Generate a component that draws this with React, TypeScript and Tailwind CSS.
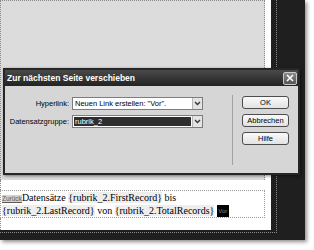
import React from "react";

const sans = { fontFamily: '"Liberation Sans", Arial, sans-serif' };
const serif = { fontFamily: '"Liberation Serif", "Times New Roman", serif' };

function Chevron() {
  return (
    <svg width="7" height="5" viewBox="0 0 7 5">
      <path d="M1 1 L3.5 3.5 L6 1" stroke="#333" strokeWidth="1.3" fill="none" />
    </svg>
  );
}

function Select({ text, selected }: { text: string; selected?: boolean }) {
  return (
    <div className="w-[131px] h-[13px] border border-[#7d7d7d] bg-white flex">
      <div
        className={
          selected
            ? "flex-1 m-[1px] bg-[#2e2e2e] text-white text-[7.5px] leading-[9px] pl-[1px] flex items-center"
            : "flex-1 text-black text-[7.5px] leading-[11px] pl-[2px] flex items-center"
        }
      >
        {text}
      </div>
      <div className="w-[10px] h-full bg-[#e4e4e4] border-l border-[#b5b5b5] flex items-center justify-center">
        <Chevron />
      </div>
    </div>
  );
}

function Btn({ label }: { label: string }) {
  return (
    <div className="w-[47px] h-[13px] border border-[#4d4d4d] rounded-[3px] bg-gradient-to-b from-[#fafafa] to-[#e2e2e2] flex items-center justify-center text-[7.5px] text-black">
      {label}
    </div>
  );
}

function Ph({ children }: { children: React.ReactNode }) {
  return <span className="bg-[#eeeeee]">{children}</span>;
}

export default function App() {
  return (
    <div className="w-[314px] h-[250px] bg-white relative overflow-hidden">
      <div className="w-[305px] h-[240px] bg-[#1f1f1f] shadow-[2px_2px_4px_rgba(0,0,0,0.45)]">
        <div className="w-[277px] h-[233px] border-r border-b border-dotted border-[#8a8a8a]">
          <div className="w-[271px] h-[230px] bg-white flex flex-col">
            <div className="w-[265px] h-[180px] shrink-0 bg-[#dcdcdc] border-t border-l border-r border-dotted border-[#8a8a8a]" />
            <div className="h-[10px] shrink-0 border-l border-dotted border-[#8a8a8a]" />
            <div
              className="w-[265px] shrink-0 border border-dotted border-[#9a9a9a] pt-[1px] pl-[1px] text-[10px] leading-[12px] text-black"
              style={serif}
            >
              <span
                className="bg-[#d2d2d2] text-[#5a5a5a] underline text-[6.5px] align-baseline"
                style={sans}
              >
                Zurück
              </span>
              Datensätze <Ph>{"{rubrik_2.FirstRecord}"}</Ph> bis
              <br />
              <Ph>{"{rubrik_2.LastRecord}"}</Ph> von <Ph>{"{rubrik_2.TotalRecords}"}</Ph>{" "}
              <span
                className="inline-block align-bottom bg-black text-[#8a8a8a] text-[6px] leading-[12px] w-[12px] h-[12px] text-center"
                style={sans}
              >
                Vor
              </span>
            </div>
            <div className="flex-1 border-l border-dotted border-[#8a8a8a]" />
          </div>
        </div>
      </div>

      <div
        className="absolute left-[3px] top-[68px] w-[297px] h-[107px] bg-[#262626] p-[2px] flex flex-col shadow-[1px_1px_3px_rgba(0,0,0,0.5)]"
        style={sans}
      >
        <div className="h-[16px] shrink-0 flex items-center justify-between pl-[2px] pr-[1px] bg-gradient-to-b from-[#4a4a4a] to-[#232323]">
          <span className="text-white font-bold text-[8.5px] leading-[10px]">
            Zur nächsten Seite verschieben
          </span>
          <div className="w-[14px] h-[13px] border border-[#c8c8c8] rounded-[2px] bg-gradient-to-b from-[#8a8a8a] to-[#555555] flex items-center justify-center">
            <svg width="8" height="8" viewBox="0 0 8 8">
              <path d="M1 1 L7 7 M7 1 L1 7" stroke="white" strokeWidth="1.6" />
            </svg>
          </div>
        </div>
        <div className="flex-1 bg-[#d6d6d6] flex text-[7.5px] text-black">
          <div className="w-[201px] pt-[11px] flex flex-col gap-[5px]">
            <div className="flex items-center h-[13px]">
              <div className="w-[67px] text-right pr-[3px]">Hyperlink:</div>
              <Select text={'Neuen Link erstellen: "Vor".'} />
            </div>
            <div className="flex items-center h-[13px]">
              <div className="w-[67px] text-right pr-[3px]">Datensatzgruppe:</div>
              <Select text="rubrik_2" selected />
            </div>
          </div>
          <div className="ml-[26px] mt-[9px] w-px h-[70px] bg-[#a2a2a2]" />
          <div className="ml-[9px] pt-[10px] flex flex-col gap-[5px]">
            <Btn label="OK" />
            <Btn label="Abbrechen" />
            <Btn label="Hilfe" />
          </div>
        </div>
      </div>
    </div>
  );
}
